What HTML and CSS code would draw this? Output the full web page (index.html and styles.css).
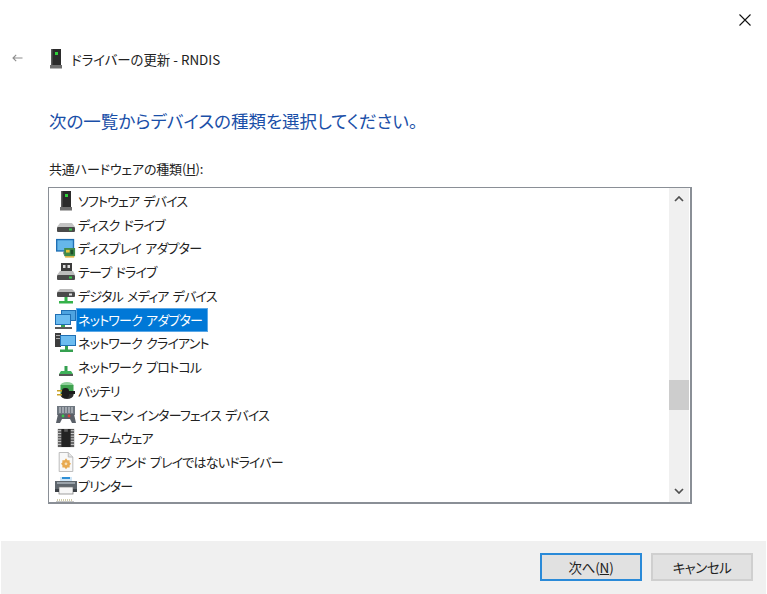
FILE: index.html
```html
<!DOCTYPE html>
<html lang="ja">
<head>
<meta charset="utf-8">
<title>ドライバーの更新</title>
<link rel="stylesheet" href="styles.css">
</head>
<body>
<svg class="defs" width="0" height="0" aria-hidden="true">
  <defs>
    <symbol id="tower" viewBox="0 0 16 20">
      <rect x="3" y="0" width="10" height="16" fill="#2b2b2b"/>
      <rect x="3" y="0" width="1.500" height="16" fill="#5a5a5a"/>
      <rect x="7" y="3" width="3" height="3" fill="#2fd13a"/>
      <rect x="2" y="16" width="12" height="3.500" fill="#6e6e6e"/>
    </symbol>
    <symbol id="disk" viewBox="0 0 20 20">
      <path d="M4 8h12l3 4H1z" fill="#c4c4c4"/>
      <rect x="1" y="12" width="18" height="5" rx="1" fill="#4a4a4a"/>
      <rect x="13" y="13.500" width="3" height="2" fill="#39c94b"/>
    </symbol>
    <symbol id="monitor" viewBox="0 0 22 22">
      <rect x="0" y="1" width="20" height="14" fill="#1f6fb4"/>
      <rect x="1.500" y="2.500" width="17" height="11" fill="#66b7ea"/>
      <rect x="8" y="15" width="4" height="3" fill="#777"/>
      <rect x="9" y="11" width="12" height="9" fill="#3f8a4a"/>
      <rect x="11" y="13" width="4" height="3" fill="#e9c33a"/>
      <rect x="16" y="13" width="3" height="5" fill="#1f4f2a"/>
      <rect x="10" y="20" width="10" height="1.500" fill="#d9a92c"/>
    </symbol>
    <symbol id="tape" viewBox="0 0 20 20">
      <rect x="5" y="1" width="11" height="8" fill="#3c3c3c"/>
      <rect x="7" y="3" width="2.500" height="3" fill="#ddd"/>
      <rect x="11.500" y="3" width="2.500" height="3" fill="#ddd"/>
      <path d="M4 9h13l2 4H1z" fill="#bdbdbd"/>
      <rect x="1" y="13" width="18" height="5" rx="1" fill="#4a4a4a"/>
      <rect x="13" y="14.500" width="3" height="2" fill="#39c94b"/>
    </symbol>
    <symbol id="media" viewBox="0 0 20 20">
      <path d="M4 3h12l3 3H1z" fill="#b9b9b9"/>
      <rect x="1" y="6" width="18" height="5" rx="1" fill="#4a4a4a"/>
      <rect x="13" y="7.500" width="3" height="2" fill="#ddd"/>
      <rect x="8.500" y="11" width="3" height="5" fill="#35b24a"/>
      <rect x="3" y="15" width="14" height="2.500" fill="#35b24a"/>
    </symbol>
    <symbol id="netadapter" viewBox="0 0 22 20">
      <rect x="6" y="0" width="15" height="11" fill="#1f6fb4"/>
      <rect x="7" y="1" width="13" height="9" fill="#4da3e0"/>
      <rect x="0" y="4" width="16" height="11" fill="#1f6fb4"/>
      <rect x="1" y="5" width="14" height="9" fill="#6cbcf0"/>
      <rect x="6" y="15" width="4" height="2" fill="#35a050"/>
      <rect x="0" y="17" width="17" height="2" fill="#5a5a5a"/>
    </symbol>
    <symbol id="netclient" viewBox="0 0 22 20">
      <rect x="0" y="0" width="6" height="14" fill="#3d3d3d"/>
      <rect x="1" y="2" width="4" height="1" fill="#aaa"/>
      <rect x="1" y="5" width="4" height="1" fill="#aaa"/>
      <rect x="5" y="2" width="16" height="11" fill="#1f6fb4"/>
      <rect x="6" y="3" width="14" height="9" fill="#6cbcf0"/>
      <rect x="10" y="13" width="3" height="4" fill="#35a050"/>
      <rect x="5" y="16.500" width="13" height="2.500" fill="#35a050"/>
    </symbol>
    <symbol id="protocol" viewBox="0 0 20 20">
      <rect x="8.500" y="9" width="3" height="5" fill="#35a050"/>
      <path d="M5 14h10l2 3H3z" fill="#3fb25a"/>
      <rect x="3" y="17" width="14" height="2" fill="#555"/>
    </symbol>
    <symbol id="battery" viewBox="0 0 20 20">
      <ellipse cx="11" cy="4" rx="6.500" ry="3" fill="#8fd09a"/>
      <rect x="4.500" y="4" width="13" height="10" fill="#3fa24f"/>
      <ellipse cx="11" cy="14" rx="6.500" ry="4" fill="#2f2f2f"/>
      <path d="M1 9h6v1.500H1zM1 13h6v1.500H1z" fill="#c9a227"/>
      <rect x="6" y="7" width="7" height="10" rx="3" fill="#1d1d1d"/>
      <rect x="13" y="10" width="6" height="3" fill="#1d1d1d"/>
    </symbol>
    <symbol id="hid" viewBox="0 0 22 20">
      <rect x="2" y="1" width="18" height="9" fill="#6f7780"/>
      <path d="M4 3h14M4 5h14M4 7h14" stroke="#d5d9de" stroke-width="1" stroke-dasharray="2 1"/>
      <path d="M1 18l2-9h16l2 9h-4l-2-4H7l-2 4z" fill="#5a6068"/>
      <circle cx="8" cy="11" r="1.400" fill="#39c94b"/>
      <circle cx="14" cy="11" r="1.400" fill="#d9433a"/>
    </symbol>
    <symbol id="firmware" viewBox="0 0 18 22">
      <rect x="0" y="1" width="18" height="20" fill="#5b5b5b"/>
      <path d="M0 3h4M0 6h4M0 9h4M0 12h4M0 15h4M0 18h4M14 3h4M14 6h4M14 9h4M14 12h4M14 15h4M14 18h4" stroke="#d8d8d8" stroke-width="1"/>
      <path d="M4 1h3v3h4V1h3v20H4z" fill="#232323"/>
    </symbol>
    <symbol id="plug" viewBox="0 0 18 22">
      <path d="M1.500.5h10l5 5v16h-15z" fill="#f8f8f8" stroke="#b5b5b5"/>
      <path d="M11.500.5v5h5" fill="#e4e4e4" stroke="#b5b5b5"/>
      <path d="M9 7l1.500 2h2.500v2.500l1.500 1.500-1.500 1.500V17h-2.500L9 19l-1.500-2H5v-2.500L3.500 13 5 11.500V9h2.500z" fill="#e8a94f"/>
      <circle cx="9" cy="13" r="1.500" fill="#f6dfb6"/>
    </symbol>
    <symbol id="printer" viewBox="0 0 22 20">
      <rect x="5" y="1" width="12" height="5" fill="#cfe6f7"/>
      <rect x="7" y="1" width="8" height="2" fill="#2f8fd6"/>
      <rect x="0" y="5" width="22" height="8" fill="#5f666d"/>
      <rect x="2" y="6" width="18" height="2" fill="#9aa2a9"/>
      <rect x="4" y="11" width="14" height="7" fill="#f7f7f7" stroke="#777" stroke-width=".7"/>
      <rect x="0" y="13" width="4" height="3" fill="#3c4146"/>
      <rect x="18" y="13" width="4" height="3" fill="#3c4146"/>
    </symbol>
    <symbol id="scanner" viewBox="0 0 22 6">
      <path d="M2 1h1M4 1h1M6 1h1M8 1h1M10 1h1M12 1h1M14 1h1M16 1h1" stroke="#a39a55" stroke-width="1"/>
      <rect x="1" y="2.500" width="18" height="3" fill="#8e8e8e"/>
    </symbol>
  </defs>
</svg>

<main class="window">
  <div class="closebar">
    <svg class="close" viewBox="0 0 12 12" width="12" height="12"><path d="M.5.5l11 11M11.500.5l-11 11" stroke="#111" stroke-width="1.100"/></svg>
  </div>

  <header class="titlebar">
    <svg class="back" viewBox="0 0 11 8" width="11" height="8"><path d="M10.500 4H1M4.200 .8L1 4l3.200 3.200" fill="none" stroke="#8d8d8d" stroke-width="1.100"/></svg>
    <svg class="title-icon"><use href="#tower"/></svg>
    <span class="title-text">ドライバーの更新 - RNDIS</span>
  </header>

  <section class="content">
    <h1 class="heading">次の一覧からデバイスの種類を選択してください。</h1>
    <label class="list-label">共通ハードウェアの種類(<u>H</u>):</label>
    <div class="listbox">
      <ul class="rows">
        <li class="row"><svg class="row-icon"><use href="#tower"/></svg><span class="row-text">ソフトウェア デバイス</span></li>
        <li class="row"><svg class="row-icon"><use href="#disk"/></svg><span class="row-text">ディスク ドライブ</span></li>
        <li class="row"><svg class="row-icon"><use href="#monitor"/></svg><span class="row-text">ディスプレイ アダプター</span></li>
        <li class="row"><svg class="row-icon"><use href="#tape"/></svg><span class="row-text">テープ ドライブ</span></li>
        <li class="row"><svg class="row-icon"><use href="#media"/></svg><span class="row-text">デジタル メディア デバイス</span></li>
        <li class="row"><svg class="row-icon"><use href="#netadapter"/></svg><span class="row-text selected">ネットワーク アダプター</span></li>
        <li class="row"><svg class="row-icon"><use href="#netclient"/></svg><span class="row-text">ネットワーク クライアント</span></li>
        <li class="row"><svg class="row-icon"><use href="#protocol"/></svg><span class="row-text">ネットワーク プロトコル</span></li>
        <li class="row"><svg class="row-icon"><use href="#battery"/></svg><span class="row-text">バッテリ</span></li>
        <li class="row"><svg class="row-icon"><use href="#hid"/></svg><span class="row-text">ヒューマン インターフェイス デバイス</span></li>
        <li class="row"><svg class="row-icon"><use href="#firmware"/></svg><span class="row-text">ファームウェア</span></li>
        <li class="row"><svg class="row-icon"><use href="#plug"/></svg><span class="row-text">プラグ アンド プレイではないドライバー</span></li>
        <li class="row"><svg class="row-icon"><use href="#printer"/></svg><span class="row-text">プリンター</span></li>
        <li class="row row-clipped"><svg class="row-icon-clipped"><use href="#scanner"/></svg></li>
      </ul>
      <div class="scrollbar">
        <svg class="arrow" viewBox="0 0 10 6" width="10" height="6"><path d="M1 5l4-4 4 4" fill="none" stroke="#505050" stroke-width="1.700"/></svg>
        <div class="track"><div class="thumb"></div></div>
        <svg class="arrow" viewBox="0 0 10 6" width="10" height="6"><path d="M1 1l4 4 4-4" fill="none" stroke="#505050" stroke-width="1.700"/></svg>
      </div>
    </div>
  </section>

  <footer class="footer">
    <button class="btn btn-primary">次へ(<u>N</u>)</button>
    <button class="btn">キャンセル</button>
  </footer>
</main>
</body>
</html>
```

FILE: styles.css
```css
* { box-sizing: border-box; }
html, body { margin: 0; padding: 0; background: #fff; }
body {
  width: 767px;
  height: 594px;
  overflow: hidden;
  font-family: "Noto Sans CJK JP", "Noto Sans", sans-serif;
  font-feature-settings: "palt" 1;
  color: #1c1c1c;
}
.defs { position: absolute; }
.window { display: flex; flex-direction: column; height: 594px; }
.closebar { display: flex; justify-content: flex-end; height: 41px; padding: 14px 16px 0 0; }
.close { display: block; }
.titlebar { display: flex; align-items: center; height: 35px; padding-left: 12px; }
.back { margin: -2px 25px 0 0; }
.title-icon { width: 16px; height: 20px; margin-right: 7px; }
.title-text { font-size: 13.4px; color: #222; }
.content { flex: 1; padding: 0 75px 0 48px; }
.heading { margin: 32px 0 0 1px; font-size: 17.5px; font-weight: 400; line-height: 26px; color: #1a4fa8; }
.list-label { display: block; margin: 25px 0 0 1px; font-size: 13px; letter-spacing: -0.15px; line-height: 20px; color: #222; }
.listbox {
  display: flex;
  height: 317px;
  margin-top: 8px;
  border: 1px solid #8a8f96;
  border-width: 1px 2px 2px 1px;
  overflow: hidden;
}
.rows { flex: 1; margin: 0; padding: 1px 0 0 6px; list-style: none; overflow: hidden; }
.row { display: flex; align-items: center; height: 23.75px; }
.row-icon { flex: none; width: 22px; height: 20px; }
.row-text {
  padding: 0 5px 0 1px;
  font-size: 13px;
  letter-spacing: -0.8px;
  word-spacing: 2px;
  line-height: 22px;
  color: #222;
  white-space: nowrap;
}
.selected { background: #0078d7; color: #fff; outline: 1px solid #5aa7e6; }
.row-clipped { align-items: flex-start; padding-top: 1px; }
.row-icon-clipped { width: 22px; height: 6px; }
.scrollbar {
  display: flex;
  flex-direction: column;
  align-items: center;
  flex: none;
  width: 20px;
  margin-right: 1px;
  background: #f0f0f0;
}
.arrow { flex: none; margin: 8px 0; }
.track { flex: 1; width: 100%; position: relative; }
.thumb { position: absolute; left: 0; right: 0; top: 170px; height: 30px; background: #cdcdcd; }
.footer {
  display: flex;
  justify-content: flex-end;
  gap: 9px;
  height: 53px;
  margin: 0 1px;
  padding: 12px 13px 0 0;
  background: #f0f0f0;
}
.btn {
  width: 102px;
  height: 28px;
  padding: 0;
  background: #e1e1e1;
  border: 2px solid #cfcfcf;
  font: inherit;
  font-feature-settings: inherit;
  font-size: 13.5px;
  letter-spacing: -0.5px;
  color: #222;
}
.btn-primary { border-color: #2a8ad8; letter-spacing: -0.2px; }
```
